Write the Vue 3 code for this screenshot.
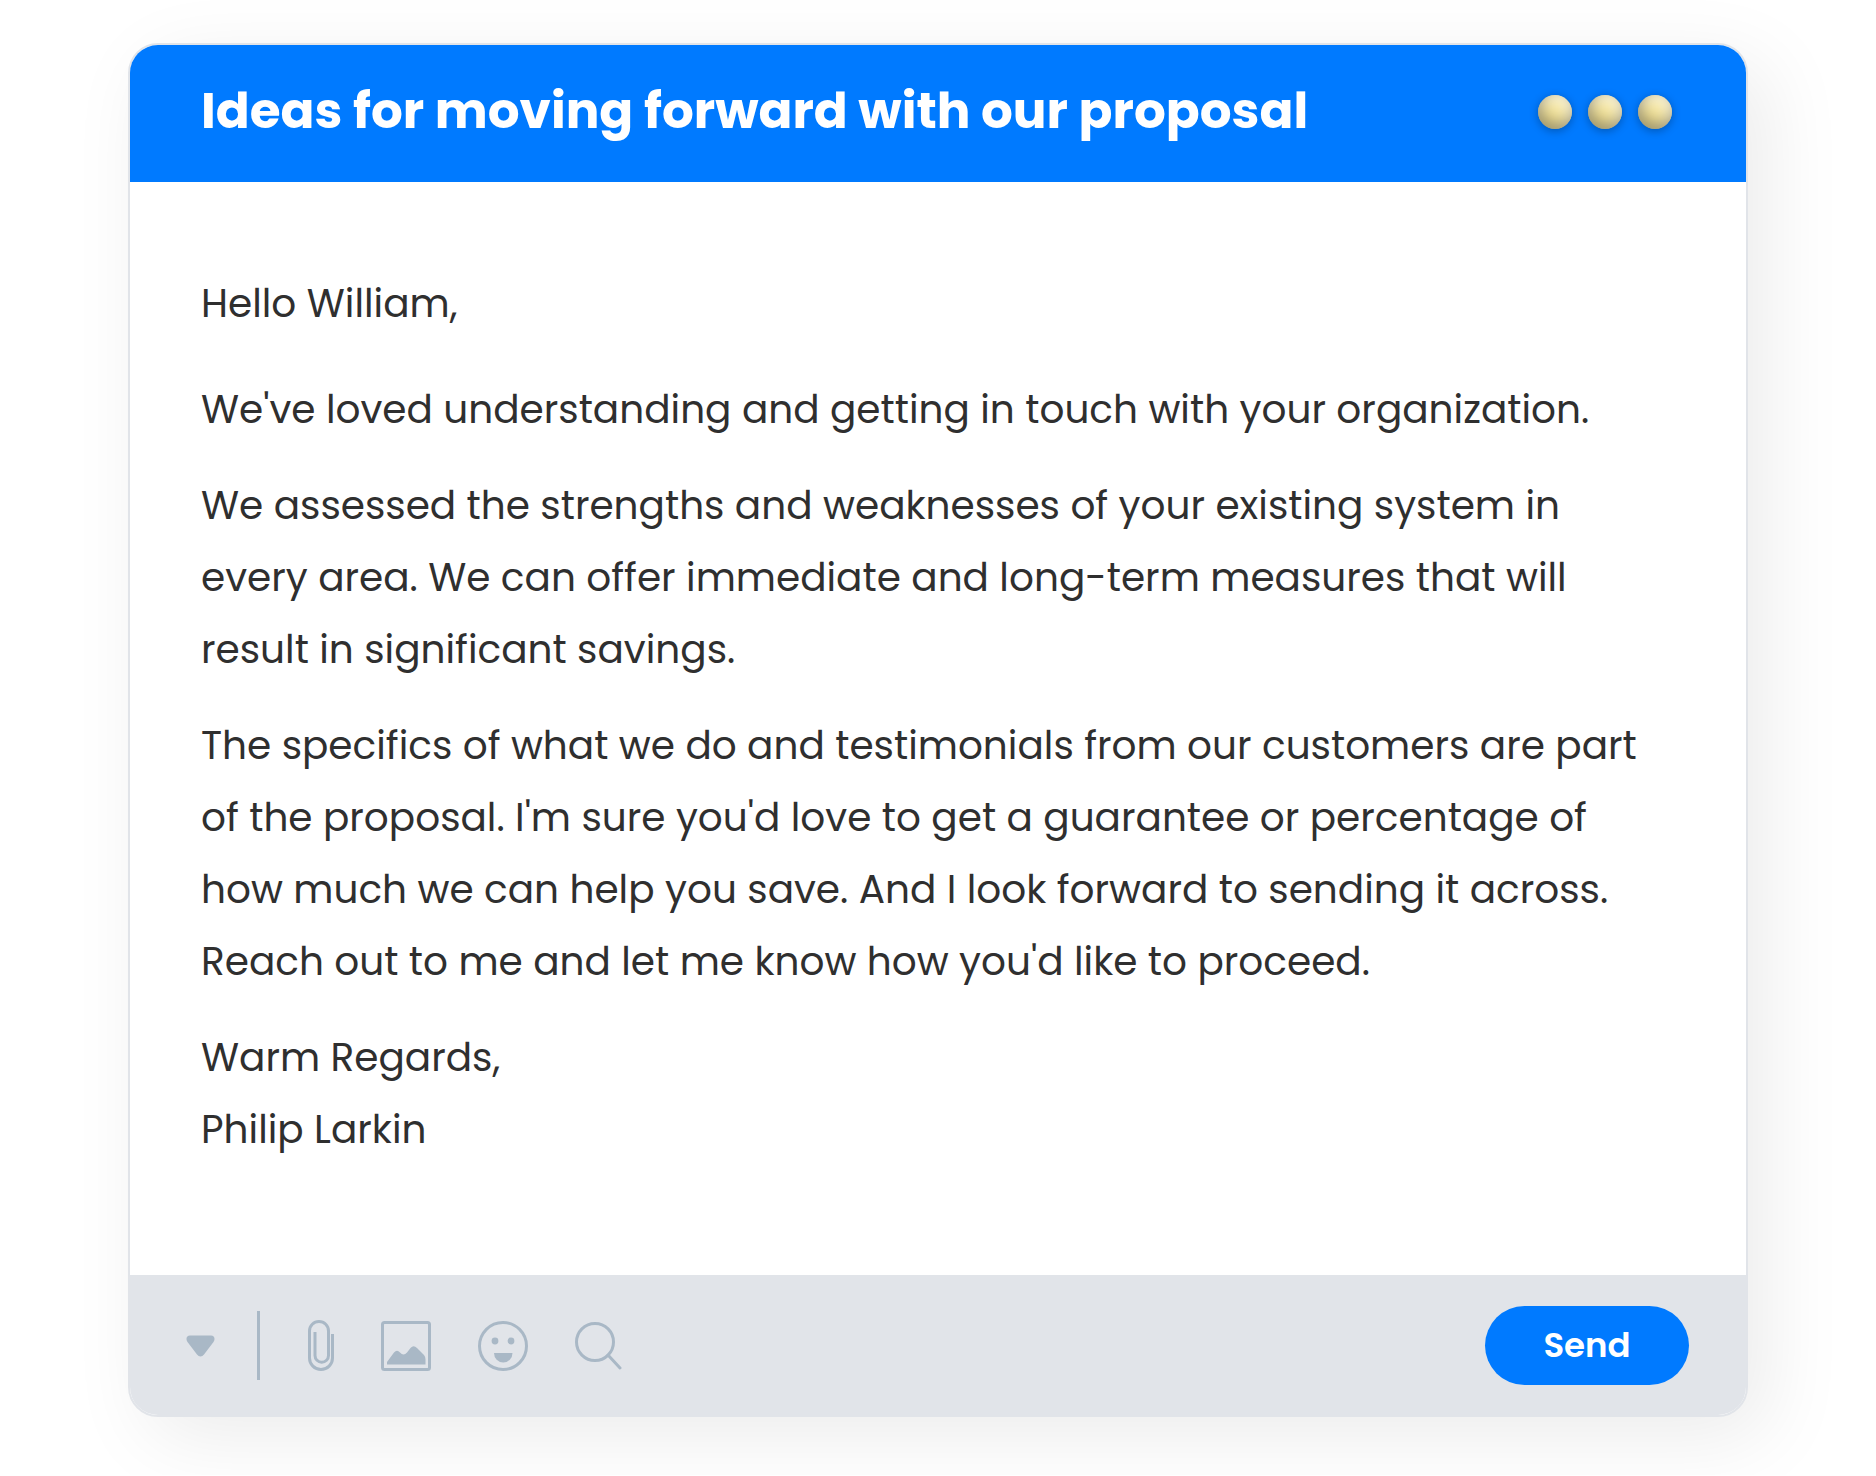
<script setup>
import { ref } from 'vue';

const subject = 'Ideas for moving forward with our proposal';
const greeting = 'Hello William,';

const paragraphs = [
  ["We've loved understanding and getting in touch with your organization."],
  [
    'We assessed the strengths and weaknesses of your existing system in',
    'every area. We can offer immediate and long-term measures that will',
    'result in significant savings.',
  ],
  [
    'The specifics of what we do and testimonials from our customers are part',
    "of the proposal. I'm sure you'd love to get a guarantee or percentage of",
    'how much we can help you save. And I look forward to sending it across.',
    "Reach out to me and let me know how you'd like to proceed.",
  ],
  ['Warm Regards,', 'Philip Larkin'],
];

const sent = ref(false);

function send() {
  sent.value = true;
}
</script>

<template>
  <main class="page">
    <article class="mail">
      <header class="mail-head">
        <h1>{{ subject }}</h1>
        <div class="window-dots" aria-hidden="true">
          <span v-for="n in 3" :key="n" class="dot"></span>
        </div>
      </header>

      <div class="mail-body">
        <p class="greeting">{{ greeting }}</p>
        <p v-for="(lines, i) in paragraphs" :key="i">
          <span v-for="line in lines" :key="line" class="line">{{ line }}</span>
        </p>
      </div>

      <footer class="mail-foot">
        <button class="tool" type="button" aria-label="More options">
          <svg width="29" height="22" viewBox="0 0 29 22">
            <path d="M4 0.5H25C28.500 0.500 29.500 4 27.500 7L18 19.500Q16.500 21.500 14.500 21.500Q12.500 21.500 11 19.500L1.500 7C-0.500 4 0.500 0.500 4 0.500Z" fill="currentColor" />
          </svg>
        </button>
        <span class="divider"></span>
        <div class="tools">
          <button class="tool" type="button" aria-label="Attach file">
            <svg width="26" height="51" viewBox="0 0 26 51">
              <path d="M24.500 14V38A11.500 11.500 0 0 1 1.500 38V11A9.500 9.500 0 0 1 20.500 11V35.500A6.500 6.500 0 0 1 7 35.500V12" fill="none" stroke="currentColor" stroke-width="3" />
            </svg>
          </button>
          <button class="tool" type="button" aria-label="Insert image">
            <svg width="50" height="50" viewBox="0 0 50 50">
              <rect x="1.500" y="1.500" width="47" height="47" rx="2" fill="none" stroke="currentColor" stroke-width="3" />
              <path d="M6 43.500V41L13 31.500Q16 28 19 31.500Q22.500 35.500 26 31.500L29.500 27Q32.500 23.500 36 27L43 34Q44.500 35.500 44.500 38.500V43.500Z" fill="currentColor" />
            </svg>
          </button>
          <button class="tool" type="button" aria-label="Insert emoji">
            <svg width="50" height="50" viewBox="0 0 50 50">
              <circle cx="25" cy="25" r="23.500" fill="none" stroke="currentColor" stroke-width="3" />
              <circle cx="17" cy="20" r="3.400" fill="currentColor" />
              <circle cx="33" cy="20" r="3.400" fill="currentColor" />
              <path d="M16 32H34.500A9.250 9.500 0 0 1 16 32Z" fill="currentColor" />
            </svg>
          </button>
          <button class="tool" type="button" aria-label="Search">
            <svg width="47" height="48" viewBox="0 0 47 48">
              <circle cx="20" cy="20" r="18.500" fill="none" stroke="currentColor" stroke-width="3" />
              <path d="M33 33L45 46" fill="none" stroke="currentColor" stroke-width="3" stroke-linecap="round" />
            </svg>
          </button>
        </div>
        <button class="send" type="button" :disabled="sent" @click="send">Send</button>
      </footer>
    </article>
  </main>
</template>

<style>
body {
  background: #fff;
}
</style>

<style scoped>
.page {
  padding: 43px 128px 58px;
  font-family: Poppins, Inter, sans-serif;
  overflow: hidden;
}

.mail {
  border: 2px solid #e1e4e9;
  border-radius: 30px;
  background: #fff;
  box-shadow: 20px 20px 80px rgba(0, 0, 0, 0.08);
}

.mail-head {
  display: flex;
  align-items: center;
  justify-content: space-between;
  min-height: 137px;
  padding: 0 74px 3px 71px;
  border-radius: 28px 28px 0 0;
  background: #007aff;
  box-sizing: border-box;
}

.mail-head h1 {
  margin: 0 0 3px;
  color: #fff;
  font-size: 50px;
  line-height: 64px;
  font-weight: 700;
}

.window-dots {
  display: flex;
  gap: 16px;
}

.dot {
  width: 34px;
  height: 34px;
  border-radius: 50%;
  background: #f4e49c;
  box-shadow:
    0 2px 10px rgba(0, 0, 0, 0.3),
    inset 3px -6px 14px rgba(0, 0, 0, 0.35),
    inset -4px 6px 14px rgba(255, 255, 255, 0.6);
}

.mail-body {
  padding: 86px 71px 109px;
  color: #2f2f2f;
  font-size: 39px;
  line-height: 72px;
}

.mail-body p {
  margin: 0 0 24px;
}

.mail-body .greeting {
  margin-bottom: 34px;
}

.mail-body p:last-child {
  margin-bottom: 0;
}

.line {
  display: block;
}

.mail-foot {
  display: flex;
  align-items: center;
  min-height: 140px;
  padding: 1px 57px 0 56px;
  border-radius: 0 0 28px 28px;
  background: #e1e4e9;
  color: #a9b8c6;
  box-sizing: border-box;
}

.tool {
  display: flex;
  padding: 0;
  border: 0;
  background: none;
  color: inherit;
  cursor: pointer;
}

.divider {
  width: 3px;
  height: 69px;
  margin: 0 48px 0 42px;
  background: #a9b8c6;
}

.tools {
  display: flex;
  align-items: center;
  gap: 47px;
}

.send {
  width: 204px;
  height: 79px;
  margin-left: auto;
  border: 0;
  border-radius: 40px;
  background: #007aff;
  color: #fff;
  font-family: inherit;
  font-size: 34px;
  font-weight: 600;
  cursor: pointer;
}
</style>
